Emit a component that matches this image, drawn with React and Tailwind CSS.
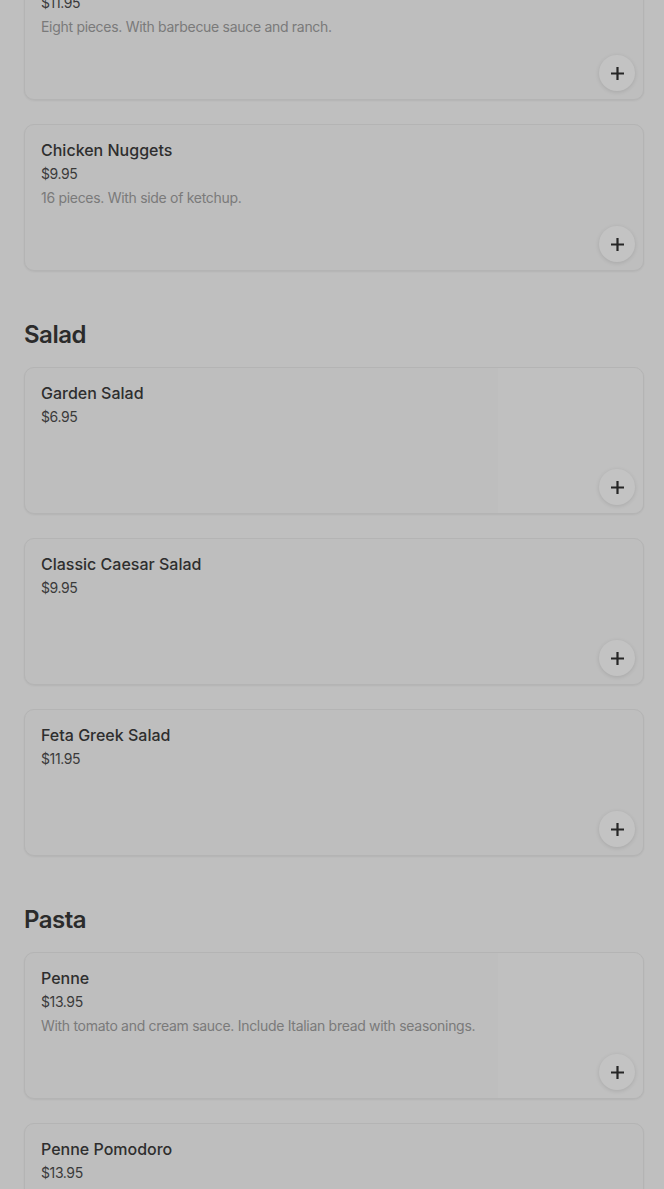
import React from "react";

const sections = [
  {
    name: null,
    items: [
      { title: "Chicken Wings", price: "$11.95", desc: "Eight pieces. With barbecue sauce and ranch." },
      { title: "Chicken Nuggets", price: "$9.95", desc: "16 pieces. With side of ketchup." },
    ],
  },
  {
    name: "Salad",
    items: [
      { title: "Garden Salad", price: "$6.95", img: true },
      { title: "Classic Caesar Salad", price: "$9.95" },
      { title: "Feta Greek Salad", price: "$11.95" },
    ],
  },
  {
    name: "Pasta",
    items: [
      { title: "Penne", price: "$13.95", desc: "With tomato and cream sauce. Include Italian bread with seasonings.", img: true },
      { title: "Penne Pomodoro", price: "$13.95" },
    ],
  },
];

function Plus() {
  return (
    <svg width="13" height="13" viewBox="0 0 13 13" aria-hidden="true">
      <path d="M6.5 1v11M1 6.5h11" stroke="#262626" strokeWidth="2.2" strokeLinecap="square" />
    </svg>
  );
}

function Card({ item }) {
  return (
    <div className="relative h-[147px] rounded-[10px] border border-[#b4b4b4] bg-[#bebebe] shadow-[0_1px_2px_rgba(0,0,0,0.06)] overflow-hidden">
      {item.img && <div className="absolute right-0 top-0 bottom-0 w-[145px] bg-[#c0c0c0]" />}
      <div className="relative px-4 pt-[13px]">
        <div className="text-[16px] leading-6 font-medium text-[#2e2e2e]">{item.title}</div>
        <div className="text-[14px] leading-6 tracking-[-0.4px] text-[#3a3a3a]">{item.price}</div>
        {item.desc && <div className="text-[14px] leading-6 tracking-[-0.3px] text-[#7a7a7a]">{item.desc}</div>}
      </div>
      <button className="absolute right-2 bottom-2 flex h-9 w-9 items-center justify-center rounded-full bg-[#c3c3c3] shadow-[0_1px_4px_rgba(0,0,0,0.12)]">
        <Plus />
      </button>
    </div>
  );
}

export default function App() {
  return (
    <div
      className="min-h-[1189px] overflow-hidden bg-[#bfbfbf]"
      style={{ fontFamily: "Inter, 'Noto Sans', sans-serif" }}
    >
      <div className="-mt-[47px] pl-6 pr-5 flex flex-col">
        {sections.map((s, i) => (
          <div key={i} className={i > 0 ? "mt-12" : ""}>
            {s.name && (
              <h2 className="mb-4 text-[24px] leading-8 font-semibold tracking-[-0.5px] text-[#2b2b2b]">{s.name}</h2>
            )}
            <div className="flex flex-col gap-6">
              {s.items.map((it) => (
                <Card key={it.title} item={it} />
              ))}
            </div>
          </div>
        ))}
      </div>
    </div>
  );
}
